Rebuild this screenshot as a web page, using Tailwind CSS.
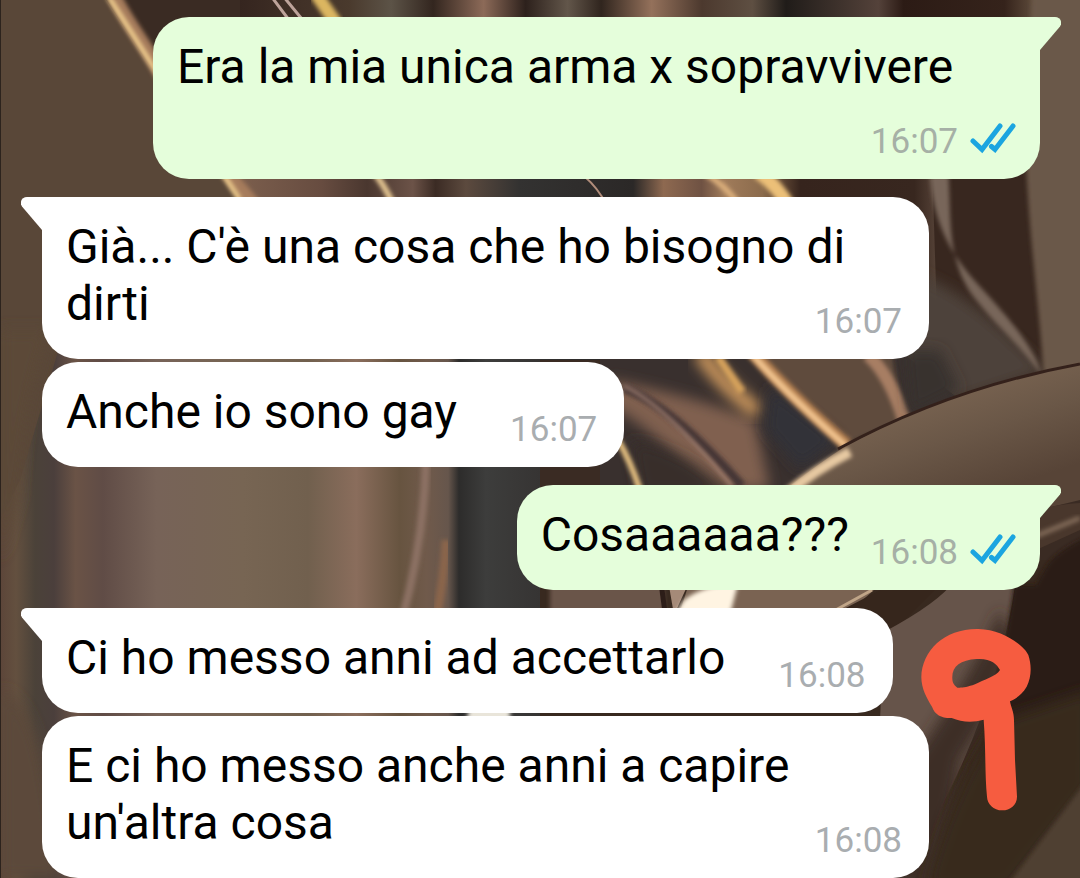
<!DOCTYPE html>
<html lang="it">
<head>
  <meta charset="UTF-8" />
  <meta name="viewport" content="width=device-width, initial-scale=1" />
  <title>Chat</title>
  <script src="https://cdn.jsdelivr.net/npm/@tailwindcss/browser@4"></script>
</head>
<body class="bg-[#3a2c24] font-[Roboto,sans-serif]">
  <div class="relative isolate overflow-hidden">

    <!-- Wallpaper -->
    <svg class="absolute inset-0 -z-10 w-full h-full" viewBox="0 0 1080 878" preserveAspectRatio="xMidYMid slice" aria-hidden="true">
      <defs>
        <filter id="soft" x="-20%" y="-20%" width="140%" height="140%"><feGaussianBlur stdDeviation="7" /></filter>
        <filter id="fine" x="-20%" y="-20%" width="140%" height="140%"><feGaussianBlur stdDeviation="2" /></filter>
        <linearGradient id="pillars" gradientUnits="userSpaceOnUse" x1="0" y1="0" x2="540" y2="0">
          <stop offset="0" stop-color="#5c4539" />
          <stop offset=".03" stop-color="#63503f" />
          <stop offset=".065" stop-color="#4b4239" />
          <stop offset=".1" stop-color="#4b3f3c" />
          <stop offset=".14" stop-color="#6a5346" />
          <stop offset=".19" stop-color="#604c46" />
          <stop offset=".29" stop-color="#776358" />
          <stop offset=".45" stop-color="#776553" />
          <stop offset=".57" stop-color="#71604e" />
          <stop offset=".66" stop-color="#8a6d5c" />
          <stop offset=".74" stop-color="#675440" />
          <stop offset=".79" stop-color="#705a4b" />
          <stop offset=".83" stop-color="#66564c" />
          <stop offset=".85" stop-color="#2d2c2b" />
          <stop offset=".9" stop-color="#3d3d3c" />
          <stop offset="1" stop-color="#363433" />
        </linearGradient>
        <linearGradient id="topStrip" gradientUnits="userSpaceOnUse" x1="240" y1="0" x2="1080" y2="0">
          <stop offset="0" stop-color="#35251f" />
          <stop offset=".13" stop-color="#4a3a2d" />
          <stop offset=".18" stop-color="#5c5347" />
          <stop offset=".23" stop-color="#33261f" />
          <stop offset=".29" stop-color="#8c6a58" />
          <stop offset=".34" stop-color="#2d211c" />
          <stop offset=".39" stop-color="#62564a" />
          <stop offset=".43" stop-color="#30251e" />
          <stop offset=".49" stop-color="#94715b" />
          <stop offset=".55" stop-color="#4c392e" />
          <stop offset=".61" stop-color="#5e4f42" />
          <stop offset=".65" stop-color="#201c19" />
          <stop offset=".76" stop-color="#54423a" />
          <stop offset=".79" stop-color="#2c1b15" />
          <stop offset=".91" stop-color="#35231b" />
          <stop offset=".95" stop-color="#63503f" />
          <stop offset="1" stop-color="#6b5848" />
        </linearGradient>
        <linearGradient id="midStrip" gradientUnits="userSpaceOnUse" x1="200" y1="0" x2="960" y2="0">
          <stop offset="0" stop-color="#564535" />
          <stop offset=".06" stop-color="#7a5d4c" />
          <stop offset=".16" stop-color="#674c40" />
          <stop offset=".22" stop-color="#4a372f" />
          <stop offset=".28" stop-color="#6c5348" />
          <stop offset=".31" stop-color="#3b2b24" />
          <stop offset=".35" stop-color="#5c4a3e" />
          <stop offset=".42" stop-color="#333231" />
          <stop offset=".57" stop-color="#2b2827" />
          <stop offset=".61" stop-color="#8e6950" />
          <stop offset=".66" stop-color="#6f5243" />
          <stop offset=".69" stop-color="#a07b5a" />
          <stop offset=".74" stop-color="#8b6b4c" />
          <stop offset=".79" stop-color="#36241d" />
          <stop offset=".94" stop-color="#38271f" />
          <stop offset=".98" stop-color="#5f4b3f" />
          <stop offset="1" stop-color="#4a362d" />
        </linearGradient>
        <linearGradient id="leaf" gradientUnits="userSpaceOnUse" x1="900" y1="390" x2="940" y2="510">
          <stop offset="0" stop-color="#7c6653" />
          <stop offset=".5" stop-color="#6a5747" />
          <stop offset="1" stop-color="#574437" />
        </linearGradient>
      </defs>

      <rect width="1080" height="878" fill="#3a2b23" />
      <rect x="240" width="840" height="100" fill="url(#topStrip)" />
      <rect x="200" y="100" width="760" height="260" fill="url(#midStrip)" />
      <rect y="350" width="540" height="528" fill="url(#pillars)" />
      <path d="M426 460Q424 540 402 620" fill="none" stroke="#8c7164" stroke-width="8" filter="url(#fine)" />
      <path d="M446 540Q444 580 436 620" fill="none" stroke="#8a654c" stroke-width="9" filter="url(#fine)" />

      <!-- left wall and its lit edge -->
      <path d="M0 0H106L152 70 236 190 250 300 60 345 20 480 0 520Z" fill="#594738" />
      <path d="M0 330H50Q24 400 18 500L0 560Z" fill="#5c4939" filter="url(#soft)" />
      <path d="M0 690C30 700 45 740 60 878H0Z" fill="#5c4a3b" filter="url(#soft)" />
      <path d="M114-4C134 35 150 48 170 92L238 186 254 205" fill="none" stroke="#a67c5c" stroke-width="14" filter="url(#fine)" />
      <path d="M108-4L154 68 240 200" fill="none" stroke="#f2cf8f" stroke-width="5" filter="url(#fine)" />
      <path d="M271-4L292 24M283-4L306 24" fill="none" stroke="#bda39a" stroke-width="3" />
      <path d="M316-6L338 26" fill="none" stroke="#dcb660" stroke-width="13" filter="url(#fine)" />
      <path d="M372 170Q384 184 394 206" fill="none" stroke="#e6c793" stroke-width="6" filter="url(#fine)" />
      <path d="M584 176Q598 188 606 204" fill="none" stroke="#b08c7a" stroke-width="2" />
      <path d="M706 174Q724 184 740 206" fill="none" stroke="#ddb07c" stroke-width="6" filter="url(#fine)" />
      <path d="M758 172Q776 184 790 208" fill="none" stroke="#ecc078" stroke-width="14" filter="url(#fine)" />

      <!-- right folds -->
      <path d="M930 100H1080V370L940 410Z" fill="#38271f" />
      <path d="M900 270Q960 280 1046 372L900 420Z" fill="#4e423a" filter="url(#soft)" />
      <path d="M930 176C935 240 965 270 985 292C1015 325 1035 350 1042 376C1020 345 1000 330 976 300C945 262 952 215 948 170Z" fill="#78665a" filter="url(#fine)" />
      <path d="M1032-10H1090V370L1044 378C1038 290 1030 250 1026 160Z" fill="#6b5848" filter="url(#fine)" />

      <!-- dark hollow between the bubbles -->
      <path d="M600 355H905L960 400 845 446 780 490H600Z" fill="#39302e" />
      <path d="M740 345H890L905 420 850 442Z" fill="#5f4c3e" filter="url(#fine)" />
      <path d="M610 380Q690 395 755 420L770 490H700Q670 440 610 405Z" fill="#80604f" filter="url(#soft)" />
      <path d="M630 440Q690 450 730 495H640Z" fill="#382f2c" filter="url(#soft)" />
      <path d="M700 352Q722 385 758 412" fill="none" stroke="#d29b5f" stroke-width="15" filter="url(#soft)" />
      <path d="M718 357L742 392" fill="none" stroke="#d6a25c" stroke-width="8" filter="url(#fine)" />
      <path d="M770 385L840 440 800 470 765 430Z" fill="#303139" filter="url(#soft)" />
      <path d="M752 352Q790 395 847 445" fill="none" stroke="#b47f50" stroke-width="13" filter="url(#fine)" />
      <path d="M752 354Q788 395 846 446" fill="none" stroke="#f4c792" stroke-width="6" filter="url(#fine)" />
      <path d="M868 355Q890 375 904 420" fill="none" stroke="#a77e64" stroke-width="13" filter="url(#fine)" />
      <path d="M904 350H940L960 390 910 415Z" fill="#38322f" filter="url(#soft)" />
      <path d="M624 388Q670 405 742 486" fill="none" stroke="#443634" stroke-width="9" filter="url(#fine)" />
      <path d="M624 386Q665 405 732 486" fill="none" stroke="#a98676" stroke-width="3" filter="url(#fine)" />
      <path d="M618 440Q630 460 640 490" fill="none" stroke="#e9c382" stroke-width="6" filter="url(#fine)" />

      <!-- big leaf -->
      <path d="M785 490Q830 455 850 444Q950 390 1080 362V500L1030 512 780 520Z" fill="url(#leaf)" />
      <path d="M786 494Q815 470 850 452" fill="none" stroke="#e7c9a2" stroke-width="10" filter="url(#fine)" />
      <path d="M838 449Q950 388 1080 364" fill="none" stroke="#34211b" stroke-width="3" />
      <path d="M1036 510Q1060 504 1080 503V530L1036 550Z" fill="#49372c" />
      <path d="M1036 536L1080 518" stroke="#816b59" stroke-width="5" filter="url(#fine)" />

      <!-- lower leaves -->
      <path d="M540 560H1080V878H540Z" fill="#38291f" />
      <path d="M550 580H663L665 620H550Z" fill="#6b5549" filter="url(#fine)" />
      <path d="M660 575L666 620" stroke="#2c1d18" stroke-width="5" />
      <path d="M668 580H690L674 615Z" fill="#a58a78" />
      <path d="M690 580H885L835 625H676Z" fill="#7a6352" />
      <path d="M684 600Q705 584 738 584L728 622H670Z" fill="#fff4e2" filter="url(#fine)" />
      <path d="M832 612L872 590" stroke="#c0a588" stroke-width="3" />
      <path d="M838 612L890 585H940L885 640Z" fill="#36261c" />
      <path d="M884 632Q940 602 955 580H1016Q1000 690 945 800L915 878H880V720Z" fill="#66544a" />
      <path d="M1012 640Q1000 700 960 760L940 888H890V790Q960 700 1000 610Z" fill="#3c2d25" filter="url(#soft)" />
      <path d="M1014 585H1036C1050 560 1050 555 1090 535V740L990 878H950C980 780 1000 680 1014 585Z" fill="#2c1d15" filter="url(#fine)" />
      <path d="M925 888Q950 790 1000 720L1090 690V790L1010 888Z" fill="#38291f" filter="url(#soft)" />
      <path d="M1005 888L1090 776V888Z" fill="#4f3f33" filter="url(#fine)" />
      <path d="M470 706H510V722H466Z" fill="#e9e5da" filter="url(#fine)" />
      <path d="M0 0H1V878H0Z" fill="#2c231d" />
    </svg>

    <!-- Messages -->
    <main class="flex flex-col items-start pt-[17px] pl-[42px] pr-10 text-5xl leading-[57px] text-black">

      <div class="relative self-end flow-root max-w-[887px] rounded-[36px] rounded-tr-none bg-[#e5fedb] pt-[21px] pb-4 pl-6 pr-6">
        <svg class="absolute top-0 left-full w-[21px] h-[33px]" viewBox="0 0 21 33" fill="#e5fedb" aria-hidden="true"><path d="M-1 0H15C20 0 23 5 20 9.500L0 33H-1Z" /></svg>
        Era la mia unica arma x sopravvivere
        <span class="float-right mt-[26px] ml-[22px] flex items-center gap-3 text-[35px] leading-[42px] text-[#a6b0a6]">
          <time>16:07</time>
          <svg class="w-[46px] h-[42px]" viewBox="0 0 46 42" fill="none" stroke="#1ba5e0" stroke-width="5" role="img" aria-label="Letto"><path stroke-linecap="round" d="M3 20L12 28.500L30 5M21.500 25.500L25 28.500L43 5" /></svg>
        </span>
      </div>

      <div class="relative flow-root max-w-[887px] mt-[18px] rounded-[36px] rounded-tl-none bg-white pt-[21px] pb-4 pl-6 pr-[27px]">
        <svg class="absolute top-0 right-full w-[21px] h-[33px]" viewBox="0 0 21 33" fill="#fff" aria-hidden="true"><path d="M22 0H6C1 0-2 5 1 9.500L21 33H22Z" /></svg>
        Già... C'è una cosa che ho bisogno di dirti
        <time class="float-right mt-[26px] ml-[53px] text-[35px] leading-[42px] text-[#a9adb0]">16:07</time>
      </div>

      <div class="flow-root max-w-[887px] mt-[3px] rounded-[36px] bg-white pt-[21px] pb-4 pl-6 pr-[27px]">
        Anche io sono gay
        <time class="float-right mt-[26px] ml-[53px] text-[35px] leading-[42px] text-[#a9adb0]">16:07</time>
      </div>

      <div class="relative self-end flow-root max-w-[887px] mt-[18px] rounded-[36px] rounded-tr-none bg-[#e5fedb] pt-[21px] pb-4 pl-6 pr-6">
        <svg class="absolute top-0 left-full w-[21px] h-[33px]" viewBox="0 0 21 33" fill="#e5fedb" aria-hidden="true"><path d="M-1 0H15C20 0 23 5 20 9.500L0 33H-1Z" /></svg>
        Cosaaaaaa???
        <span class="float-right mt-[26px] ml-[22px] flex items-center gap-3 text-[35px] leading-[42px] text-[#a6b0a6]">
          <time>16:08</time>
          <svg class="w-[46px] h-[42px]" viewBox="0 0 46 42" fill="none" stroke="#1ba5e0" stroke-width="5" role="img" aria-label="Letto"><path stroke-linecap="round" d="M3 20L12 28.500L30 5M21.500 25.500L25 28.500L43 5" /></svg>
        </span>
      </div>

      <div class="relative flow-root max-w-[887px] mt-[18px] rounded-[36px] rounded-tl-none bg-white pt-[21px] pb-4 pl-6 pr-[27px]">
        <svg class="absolute top-0 right-full w-[21px] h-[33px]" viewBox="0 0 21 33" fill="#fff" aria-hidden="true"><path d="M22 0H6C1 0-2 5 1 9.500L21 33H22Z" /></svg>
        Ci ho messo anni ad accettarlo
        <time class="float-right mt-[26px] ml-[53px] text-[35px] leading-[42px] text-[#a9adb0]">16:08</time>
      </div>

      <div class="flow-root max-w-[887px] mt-[3px] rounded-[36px] bg-white pt-[21px] pb-4 pl-6 pr-[27px]">
        E ci ho messo anche anni a capire un'altra cosa
        <time class="float-right mt-[26px] ml-[53px] text-[35px] leading-[42px] text-[#a9adb0]">16:08</time>
      </div>
    </main>

    <!-- Hand-drawn page number -->
    <svg class="absolute bottom-0 right-0 w-[200px] h-[278px]" viewBox="0 0 600 834" fill="#f65c40" fill-rule="evenodd" role="img" aria-label="9">
      <path d="M124 232C126 150 195 85 295 87C370 88 435 140 445 165C455 195 455 230 440 260C425 285 405 298 390 304C392 320 402 335 402 360L405 480 411 590C411 615 390 631 367 631C340 631 322 612 321 590C314 520 318 450 311 359C280 368 245 367 215 354C185 355 165 345 156 320C140 295 124 265 124 232ZM217 235C215 200 240 180 290 177C330 174 350 190 360 210C350 228 310 240 285 253C260 262 245 264 232 263C220 255 217 245 217 235Z" />
    </svg>
  </div>
</body>
</html>
